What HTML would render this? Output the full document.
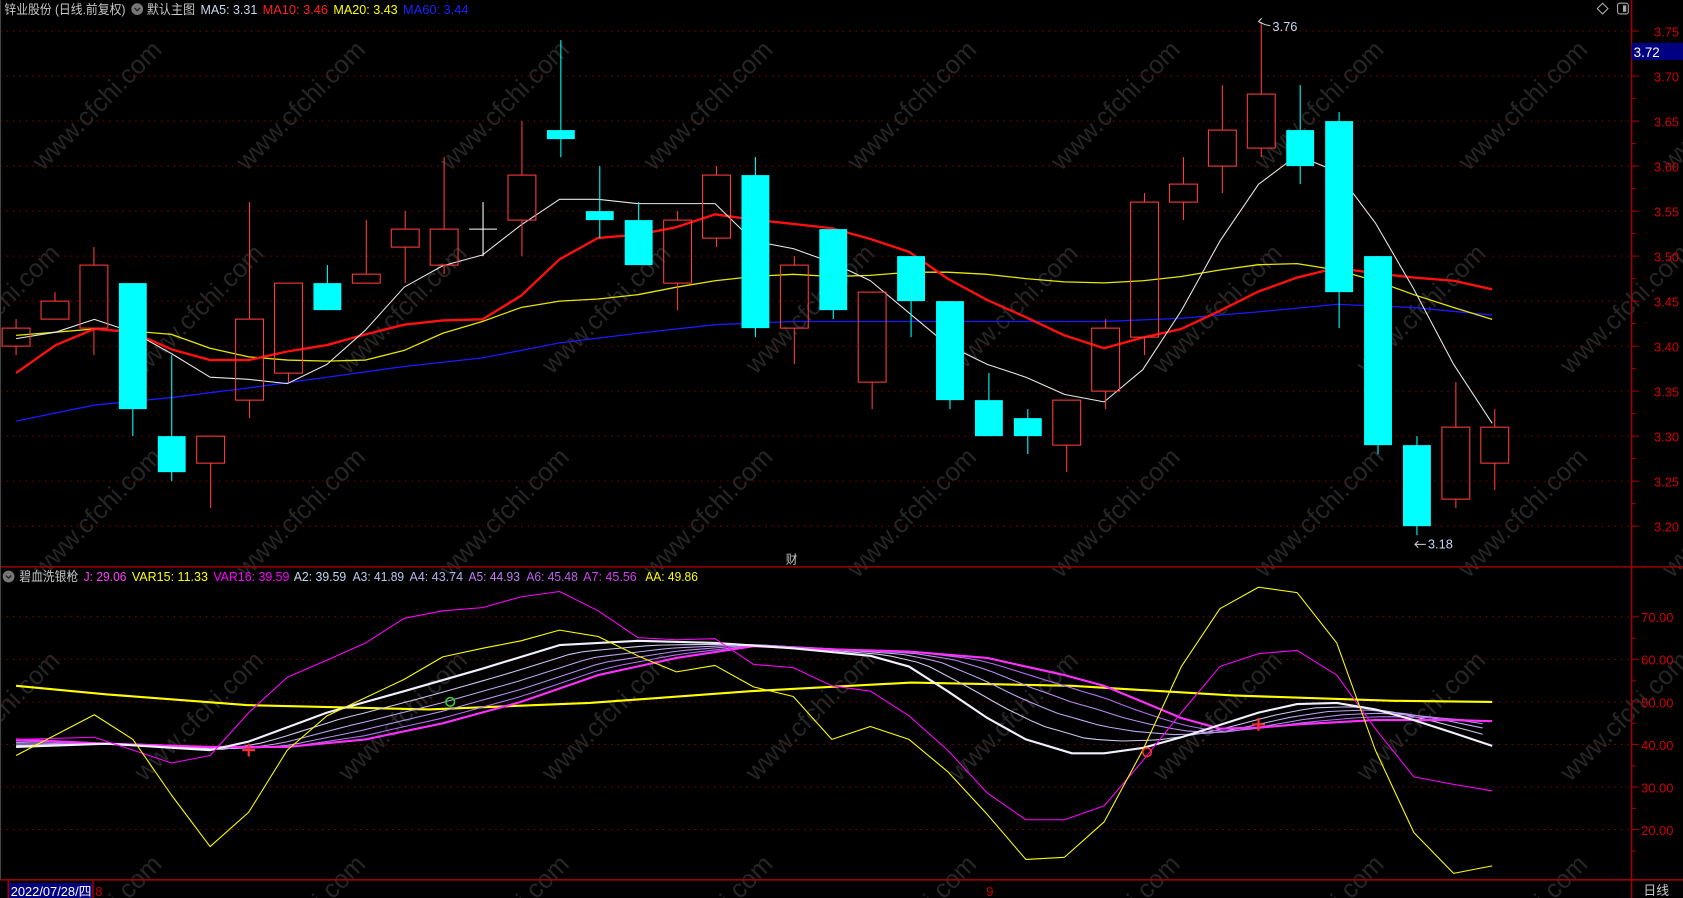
<!DOCTYPE html>
<html><head><meta charset="utf-8"><style>
html,body{margin:0;padding:0;background:#000;overflow:hidden;width:1683px;height:898px}
svg{display:block}
text{font-family:"Liberation Sans","Noto Sans CJK SC",sans-serif}
</style></head><body>
<svg id="s" width="1683" height="898" viewBox="0 0 1570 838" preserveAspectRatio="none" xmlns="http://www.w3.org/2000/svg">
<rect width="1570" height="838" fill="#000"/>
<g id="wm" fill="#262626" font-size="24"></g>
<g id="grid"></g>
<g id="lines"></g>
<g id="cand"></g>
<line x1="1522" y1="0" x2="1522" y2="838" stroke="#a00000" stroke-width="1.5"/>
<line x1="0" y1="529" x2="1570" y2="529" stroke="#a00000" stroke-width="1.5"/>
<line x1="0" y1="821" x2="1570" y2="821" stroke="#a00000" stroke-width="1.5"/>
<line x1="0.5" y1="0" x2="0.5" y2="821" stroke="#444" stroke-width="1"/>
<g font-size="12" lengthAdjust="spacingAndGlyphs">
<text x="4" y="13" fill="#c8c8c8" textLength="113" lengthAdjust="spacingAndGlyphs">锌业股份 (日线.前复权)</text>
<circle cx="128" cy="8.5" r="5.5" fill="#777"/><path d="M125.5 7.5 L128 10 L130.5 7.5" stroke="#222" stroke-width="1.3" fill="none"/>
<text x="137" y="13" fill="#c8c8c8" textLength="45" lengthAdjust="spacingAndGlyphs">默认主图</text>
<text x="187" y="13" fill="#c8d8f0" textLength="53" lengthAdjust="spacingAndGlyphs">MA5: 3.31</text>
<text x="245" y="13" fill="#ff2020" textLength="61" lengthAdjust="spacingAndGlyphs">MA10: 3.46</text>
<text x="311" y="13" fill="#ffff00" textLength="60" lengthAdjust="spacingAndGlyphs">MA20: 3.43</text>
<text x="376" y="13" fill="#2020ff" textLength="61" lengthAdjust="spacingAndGlyphs">MA60: 3.44</text>
</g>
<path d="M1495 3 L1500 8 L1495 13 L1490 8 Z" stroke="#aaa" fill="none"/>
<rect x="1509" y="3" width="10" height="10" rx="2" stroke="#aaa" fill="none"/><rect x="1514" y="5" width="3" height="6" fill="#aaa"/>
<rect x="1522" y="40" width="48" height="16" fill="#000080"/>
<text x="1524" y="53" font-size="12.5" fill="#fff">3.72</text>
<path d="M1174 20 L1180 23 L1185 24" stroke="#ccc" fill="none"/><path d="M1177 17 L1174 20 L1177 22" stroke="#ccc" fill="none"/>
<text x="1187" y="29" font-size="12" fill="#c8d8f0">3.76</text>
<path d="M1320 508 L1330 508" stroke="#ccc" fill="none"/><path d="M1323 505 L1320 508 L1323 511" stroke="#ccc" fill="none"/>
<text x="1332" y="512" font-size="12" fill="#c8d8f0">3.18</text>
<text x="733" y="526" font-size="11" fill="#c8c8c8">财</text>
<circle cx="8" cy="538" r="5.5" fill="#777"/><path d="M5.5 537 L8 539.5 L10.5 537" stroke="#222" stroke-width="1.3" fill="none"/>
<g font-size="12">
<text x="18" y="542" fill="#c8c8c8" textLength="55" lengthAdjust="spacingAndGlyphs">碧血洗银枪</text>
<text x="78" y="542" fill="#ff40ff" textLength="40" lengthAdjust="spacingAndGlyphs">J: 29.06</text>
<text x="123" y="542" fill="#ffff00" textLength="71" lengthAdjust="spacingAndGlyphs">VAR15: 11.33</text>
<text x="199" y="542" fill="#ff00ff" textLength="71" lengthAdjust="spacingAndGlyphs">VAR16: 39.59</text>
<text x="274" y="542" fill="#c8d8f0" textLength="49" lengthAdjust="spacingAndGlyphs">A2: 39.59</text>
<text x="329" y="542" fill="#c0c8f0" textLength="48" lengthAdjust="spacingAndGlyphs">A3: 41.89</text>
<text x="382" y="542" fill="#b8b0f0" textLength="50" lengthAdjust="spacingAndGlyphs">A4: 43.74</text>
<text x="437" y="542" fill="#c080f0" textLength="48" lengthAdjust="spacingAndGlyphs">A5: 44.93</text>
<text x="491" y="542" fill="#c060f0" textLength="48" lengthAdjust="spacingAndGlyphs">A6: 45.48</text>
<text x="544" y="542" fill="#d040f0" textLength="50" lengthAdjust="spacingAndGlyphs">A7: 45.56</text>
<text x="602" y="542" fill="#ffff00" textLength="49" lengthAdjust="spacingAndGlyphs">AA: 49.86</text>
</g>
<path d="M226 700 H238 M232 694 V706" stroke="#ff3030" stroke-width="2"/>
<path d="M1168 676 H1180 M1174 670 V682" stroke="#ff3030" stroke-width="2"/>
<circle cx="420" cy="655" r="4" stroke="#30d030" fill="none" stroke-width="1.5"/>
<circle cx="1070" cy="702" r="4" stroke="#ff3030" fill="none" stroke-width="1.5"/>
<rect x="8" y="824" width="78" height="14" fill="#000080"/>
<rect x="7" y="822" width="1.5" height="16" fill="#a00000"/><rect x="86" y="822" width="1.5" height="16" fill="#a00000"/>
<text x="10" y="836" font-size="12" fill="#fff">2022/07/28/四</text>
<text x="89" y="836" font-size="12" fill="#c00000">8</text>
<text x="920" y="836" font-size="12" fill="#c00000">9</text>
<text x="1533" y="835" font-size="12" fill="#c8c8c8">日线</text>
</svg>
<script>
const NS="http://www.w3.org/2000/svg";
function el(p,t,a){const e=document.createElementNS(NS,t);for(const k in a)e.setAttribute(k,a[k]);p.appendChild(e);return e;}
const g=id=>document.getElementById(id);
for(let r=-1;r<6;r++)for(let c=-1;c<10;c++){const x=c*190+(r%2)*95+40,y=r*190+160;const t=el(g('wm'),'text',{x:x,y:y,transform:`rotate(-45 ${x} ${y})`});t.textContent="www.cfchi.com";}
const py=p=>29+(3.75-p)*840;
const G=g('grid');
for(let i=0;i<12;i++){const p=3.75-i*0.05,y=py(p);
 el(G,'line',{x1:0,x2:1522,y1:y,y2:y,stroke:'#7a0000','stroke-dasharray':'1.5 4.5'});
 el(G,'line',{x1:1522,x2:1529,y1:y,y2:y,stroke:'#a00000'});
 if(i<11){el(G,'line',{x1:1522,x2:1526,y1:y+21,y2:y+21,stroke:'#a00000'});}
 const t=el(G,'text',{x:1543,y:y+5,'font-size':12,fill:'#d00000'});t.textContent=p.toFixed(2);}
const iy=v=>655-(v-50)*3.97;
for(let v=20;v<=70;v+=10){const y=iy(v);
 el(G,'line',{x1:0,x2:1522,y1:y,y2:y,stroke:'#7a0000','stroke-dasharray':'1.5 4.5'});
 el(G,'line',{x1:1522,x2:1529,y1:y,y2:y,stroke:'#a00000'});
 el(G,'line',{x1:1522,x2:1526,y1:y+20,y2:y+20,stroke:'#a00000'});
 const t=el(G,'text',{x:1531,y:y+5,'font-size':12,fill:'#d00000'});t.textContent=v.toFixed(2);}
const C=[[3.40,3.42,3.43,3.39],[3.43,3.45,3.46,3.43],[3.42,3.49,3.51,3.39],[3.47,3.33,3.47,3.30],[3.30,3.26,3.39,3.25],[3.27,3.30,3.30,3.22],[3.34,3.43,3.56,3.32],[3.37,3.47,3.47,3.36],[3.47,3.44,3.49,3.44],[3.47,3.48,3.54,3.47],[3.51,3.53,3.55,3.47],[3.49,3.53,3.61,3.48],[3.53,3.53,3.56,3.50],[3.54,3.59,3.65,3.50],[3.64,3.63,3.74,3.61],[3.55,3.54,3.60,3.52],[3.54,3.49,3.56,3.49],[3.47,3.54,3.55,3.44],[3.52,3.59,3.60,3.51],[3.59,3.42,3.61,3.41],[3.42,3.49,3.50,3.38],[3.53,3.44,3.53,3.43],[3.36,3.46,3.46,3.33],[3.50,3.45,3.50,3.41],[3.45,3.34,3.45,3.33],[3.34,3.30,3.37,3.30],[3.32,3.30,3.33,3.28],[3.29,3.34,3.34,3.26],[3.35,3.42,3.43,3.33],[3.41,3.56,3.57,3.39],[3.56,3.58,3.61,3.54],[3.60,3.64,3.69,3.57],[3.62,3.68,3.76,3.61],[3.64,3.60,3.69,3.58],[3.65,3.46,3.66,3.42],[3.50,3.29,3.50,3.28],[3.29,3.20,3.30,3.19],[3.23,3.31,3.36,3.22],[3.27,3.31,3.33,3.24]];
const X=i=>15+i*36.3;
C.forEach((c,i)=>{const[o,cl,h,l]=c,x=X(i),K=g('cand');
 if(o===cl){el(K,'line',{x1:x,x2:x,y1:py(h),y2:py(l),stroke:'#fff'});el(K,'line',{x1:x-13,x2:x+13,y1:py(o),y2:py(o),stroke:'#fff'});return;}
 if(cl>o){const col='#ff3a3a';el(K,'line',{x1:x,x2:x,y1:py(h),y2:py(cl),stroke:col});el(K,'line',{x1:x,x2:x,y1:py(o),y2:py(l),stroke:col});
  el(K,'rect',{x:x-13,y:py(cl),width:26,height:Math.max(1,py(o)-py(cl)),fill:'none',stroke:col});}
 else{const col='#00ffff';el(K,'line',{x1:x,x2:x,y1:py(h),y2:py(l),stroke:col});el(K,'rect',{x:x-13,y:py(o),width:26,height:Math.max(2,py(cl)-py(o)),fill:col});}
});
const L=g('lines');
function pl(pts,col,w){el(L,'polyline',{points:pts.map(p=>p.join(',')).join(' '),fill:'none',stroke:col,'stroke-width':w,'stroke-linejoin':'round'});}
pl([[15,393],[88,378],[160,371],[232,362],[305,352],[377,342],[450,334],[522,320],[595,311],[667,303],[740,300],[812,300],[884,300],[957,300],[1030,300],[1102,297],[1174,291],[1247,284],[1319,287],[1392,294]],'#1a1aff',1.2);
pl([[15,313],[52,310],[88,307],[124,309],[160,312],[196,325],[232,333],[268,336],[305,337],[341,336],[377,327],[413,311],[450,300],[486,287],[522,281],[558,279],[595,275],[631,268],[667,262],[703,258],[740,256],[776,258],[812,257],[848,254],[884,254],[921,256],[957,260],[993,263],[1030,264],[1066,262],[1102,258],[1138,252],[1174,247],[1210,246],[1247,252],[1283,262],[1319,275],[1356,287],[1392,298]],'#e6e600',1.2);
pl([[15,348],[52,322],[88,307],[124,310],[160,326],[196,336],[232,336],[268,328],[305,322],[341,312],[377,303],[413,299],[450,298],[486,276],[522,242],[558,222],[595,219],[631,212],[667,200],[703,205],[740,209],[776,213],[812,223],[848,235],[884,260],[921,280],[957,296],[993,313],[1030,325],[1066,315],[1102,307],[1138,290],[1174,272],[1210,259],[1247,250],[1283,255],[1319,259],[1356,262],[1392,270]],'#ff1010',2.2);
pl([[15,316],[52,310],[88,298],[124,310],[160,330],[196,352],[232,354],[268,358],[305,340],[341,308],[377,268],[413,248],[450,238],[486,210],[522,186],[558,186],[595,190],[631,190],[667,190],[703,225],[740,232],[776,245],[812,262],[848,292],[884,322],[921,340],[957,352],[993,368],[1030,375],[1066,345],[1102,290],[1138,225],[1174,172],[1210,145],[1247,160],[1283,208],[1319,270],[1356,340],[1392,395]],'#e8e8e8',1);
function interp(pts,x){for(let i=0;i<pts.length-1;i++){if(x>=pts[i][0]&&x<=pts[i+1][0]){const t=(x-pts[i][0])/(pts[i+1][0]-pts[i][0]);return pts[i][1]+t*(pts[i+1][1]-pts[i][1]);}}return pts[pts.length-1][1];}
const A2=[[15,697],[100,694],[196,700],[232,692],[305,665],[377,645],[450,624],[522,602],[595,598],[667,600],[740,605],[812,612],[848,622],[884,645],[921,670],[957,690],[1000,703],[1030,703],[1066,698],[1102,688],[1174,665],[1210,657],[1247,656],[1283,662],[1319,672],[1356,684],[1392,696]];
const A7=[[15,690],[100,694],[196,697],[268,697],[341,690],[413,675],[486,655],[558,630],[631,614],[703,603],[776,606],[848,608],[921,614],[993,630],[1030,640],[1066,655],[1102,670],[1138,680],[1174,679],[1210,676],[1283,672],[1356,672],[1392,673]];
pl([[15,640],[100,648],[230,658],[400,662],[550,656],[700,645],[850,637],[1000,640],[1150,649],[1300,654],[1392,655]],'#ffff00',2);
const cols=['#d0c8f0','#c0a8f0','#b890f0','#b070f0'];
for(let k=1;k<=4;k++){const pts=[];const sh=k*14;for(let x=15;x<=1392;x+=12){const xa=Math.max(15,x-sh);const a=interp(A2,xa),b=interp(A7,x);const t=k/5;pts.push([x,a*(1-t)+b*t]);}pl(pts,cols[k-1],1);}
pl(A7,'#ff30ff',2);
pl(A2,'#f0f0ff',2);
pl([[15,690],[88,688],[124,700],[160,712],[196,705],[232,665],[268,632],[305,616],[341,600],[377,577],[413,570],[450,567],[486,557],[522,552],[558,570],[595,595],[631,597],[667,596],[703,620],[740,623],[776,640],[812,645],[848,668],[884,700],[921,740],[957,765],[993,765],[1030,752],[1066,710],[1102,665],[1138,622],[1174,610],[1210,607],[1247,630],[1283,680],[1319,725],[1356,732],[1392,738]],'#ff00ff',1);
pl([[15,705],[88,667],[124,690],[160,742],[196,790],[232,758],[268,700],[305,668],[341,651],[377,634],[413,613],[450,605],[486,598],[522,588],[558,594],[595,612],[631,627],[667,621],[703,641],[740,650],[776,690],[812,678],[848,690],[884,720],[921,760],[957,802],[993,800],[1030,767],[1066,700],[1102,622],[1138,568],[1174,548],[1210,553],[1247,600],[1283,700],[1319,777],[1356,815],[1392,808]],'#ffff00',1);
</script>
</body></html>
